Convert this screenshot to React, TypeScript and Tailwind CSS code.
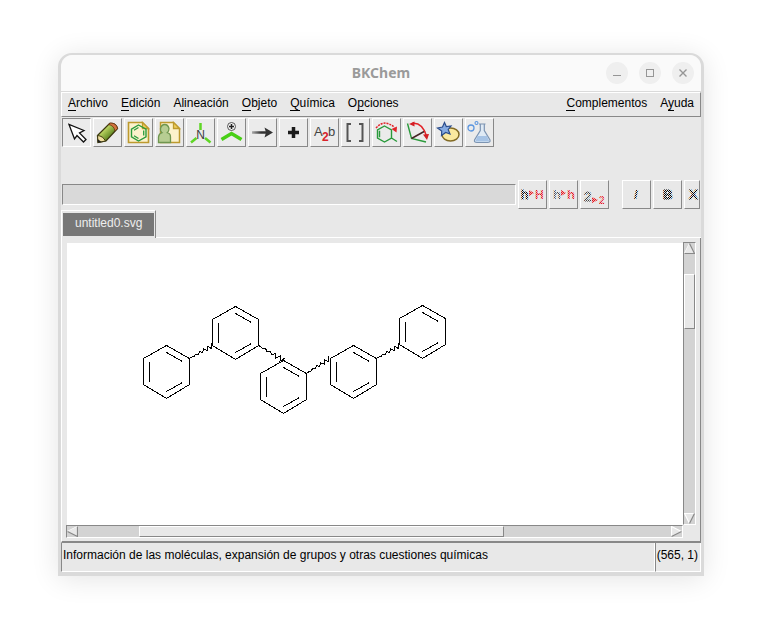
import React from 'react';

type Point = [number, number];

const leftMenus: [string, string, string][] = [
  ['', 'A', 'rchivo'],
  ['', 'E', 'dición'],
  ['A', 'l', 'ineación'],
  ['', 'O', 'bjeto'],
  ['', 'Q', 'uímica'],
  ['O', 'p', 'ciones'],
];

const rightMenus: [string, string, string][] = [
  ['', 'C', 'omplementos'],
  ['A', 'y', 'uda'],
];

const raised = 'border border-t-white border-l-white border-r-[#888888] border-b-[#888888]';
const sunken = 'border border-t-[#888888] border-l-[#888888] border-r-white border-b-white';

const MenuItem: React.FC<{ label: [string, string, string] }> = ({ label }) => (
  <button className="text-xs leading-4 text-black">
    {label[0]}
    <span className="border-b border-black">{label[1]}</span>
    {label[2]}
  </button>
);

// icons are drawn on the 27px face of the button
const tools: { name: string; icon: React.ReactNode }[] = [
  {
    name: 'Editar',
    icon: (
      <path d="M6 5.5 L11.5 20 L14 16.500 L20.500 23 L23 20.500 L16.500 14 L21 11.500 Z" fill="#fff" stroke="#111" strokeWidth="1.3" />
    ),
  },
  {
    name: 'Dibujar',
    icon: (
      <>
        <path d="M3.500 16.500 L15.500 4.500 Q22 3.500 23.500 9.500 L12 22 L4 23.500 Z" fill="url(#pencil)" stroke="#3d3a10" strokeWidth="1.300" />
        <path d="M14.500 5.500 L16.500 4 Q22.500 4 23.500 9.500 L21 12 Q20 6.500 14.500 5.500 Z" fill="#d2733f" stroke="#6b3510" strokeWidth="0.800" />
        <path d="M3.500 16.500 Q9 17 11.500 22 L4 23.500 Z" fill="#f1dfa0" stroke="#3d3a10" />
        <path d="M3.700 20 L7.500 23 L4 23.500 Z" fill="#222" />
      </>
    ),
  },
  {
    name: 'Plantillas',
    icon: (
      <>
        <path d="M3.500 3.500 H17.500 L23.500 9.500 V23.500 H3.500 Z" fill="#fcf2cc" stroke="#bd9a2e" strokeWidth="1.600" />
        <path d="M17.500 3.500 V9.500 H23.500 Z" fill="#efcf5c" stroke="#bd9a2e" strokeWidth="1.300" />
        <path d="M13.500 6 L21 10.200 V17.800 L13.500 22 L6.500 17.800 V10.200 Z" fill="none" stroke="#2b9c3c" strokeWidth="1.400" />
        <path d="M13.500 8.500 L9 11.200 M9 16.800 L13.500 19.500 M18.700 11.500 V16.500" fill="none" stroke="#2b9c3c" strokeWidth="1.300" />
      </>
    ),
  },
  {
    name: 'Plantillas de usuario',
    icon: (
      <>
        <path d="M4.500 3.500 H17.500 L23.500 9.500 V23.500 H4.500 Z" fill="#fcf2cc" stroke="#bd9a2e" strokeWidth="1.500" />
        <path d="M17.500 3.500 V9.500 H23.500 Z" fill="#efcf5c" stroke="#bd9a2e" strokeWidth="1.300" />
        <path d="M2.500 23.500 V18 Q3 14.500 6 13.700 Q4 12 4.500 9.500 Q5.500 5.500 8.700 5.500 Q12 5.500 13 9.500 Q13 12 11.300 13.700 Q14.500 14.500 14.500 18 V23.500 Z" fill="#b7cd92" stroke="#6f9650" strokeWidth="1.300" />
      </>
    ),
  },
  {
    name: 'Átomo',
    icon: (
      <>
        <path d="M13.500 4 V11" stroke="#5fd625" strokeWidth="2.500" />
        <path d="M9.500 19 L4 23.500 M18 19 L23.500 23.500" stroke="#5fd625" strokeWidth="2.500" />
        <text x="13.500" y="20" textAnchor="middle" fontSize="12" fill="#3b3b3b">N</text>
      </>
    ),
  },
  {
    name: 'Marca',
    icon: (
      <>
        <path d="M3.500 20.500 L13.500 14.500 L23.500 20.500" fill="none" stroke="#48cf16" strokeWidth="3.500" />
        <circle cx="13.500" cy="7.500" r="4" fill="#f4f4f4" stroke="#555" />
        <path d="M11 7.500 H16 M13.500 5 V10" stroke="#222" strokeWidth="1.500" />
      </>
    ),
  },
  {
    name: 'Flecha',
    icon: (
      <>
        <path d="M3 13.500 H18" stroke="url(#shaft)" strokeWidth="2.500" />
        <path d="M15.500 8.500 L24 13.500 L15.500 18.500 L17 13.500 Z" fill="#333" />
      </>
    ),
  },
  { name: 'Más', icon: <path d="M8 13.500 H19 M13.500 8 V19" stroke="#1b1b1b" strokeWidth="3.500" /> },
  {
    name: 'Texto',
    icon: (
      <>
        <text x="3" y="17" fontSize="13" fill="#444">A</text>
        <text x="11" y="22" fontSize="12" fontWeight="700" fill="#d8232a">2</text>
        <text x="17" y="17" fontSize="13" fill="#444">b</text>
      </>
    ),
  },
  {
    name: 'Corchetes',
    icon: <path d="M9 5 H5.500 V22 H9 M17 5 H20.500 V22 H17" fill="none" stroke="#555" strokeWidth="2" />,
  },
  {
    name: 'Rotar',
    icon: (
      <>
        <path d="M11.500 7 L18.500 11 V19 L11.500 23 L4.500 19 V11 Z M6.500 11.800 V18.200 M18.500 19 L24 22.500" fill="none" stroke="#2a9a3b" strokeWidth="1.400" />
        <path d="M3 9 Q11.500 -0.500 21.500 8.500" fill="none" stroke="#e12329" strokeWidth="1.500" strokeDasharray="2 1" />
        <path d="M18.500 10 L24 7.500 L23.500 13.500 Z" fill="#e12329" />
      </>
    ),
  },
  {
    name: 'Alinear',
    icon: (
      <>
        <path d="M3.500 4.500 L7.500 19.500 L22 23" fill="none" stroke="#2a9a3b" strokeWidth="1.400" />
        <path d="M7.500 19.500 L21 12" stroke="#452525" strokeWidth="1.500" />
        <path d="M8 4.500 Q18 3 22.500 17" fill="none" stroke="#e12329" strokeWidth="1.500" />
        <path d="M5 5 L10.500 2.500 V7.500 Z M19 15.500 L25 15 L23 21 Z" fill="#d41d24" />
      </>
    ),
  },
  {
    name: 'Vectores',
    icon: (
      <>
        <ellipse cx="15.500" cy="15.500" rx="8.500" ry="6.500" fill="#fbe99f" stroke="#826a24" strokeWidth="1.500" />
        <path d="M9.500 3.500 L11.300 7.500 L16 7 L13.200 10.500 L15 15 L10.700 13.500 L6.500 16.500 L6.700 12 L2.500 9 L7.500 8 Z" fill="#86abe2" stroke="#2c4d8b" strokeWidth="1.200" />
      </>
    ),
  },
  {
    name: 'Varios',
    icon: (
      <>
        <path d="M13 5 H19.500 M14.300 5.500 V11.500 L8.500 21 Q8 23.500 11 23.500 H21.500 Q24.500 23.500 24 21 L18.300 11.500 V5.500" fill="#dfeaf5" stroke="#7c94b2" strokeWidth="1.200" />
        <path d="M11.500 17 H21 L23.300 22.500 H9.300 Z" fill="#a6c3e5" />
        <circle cx="5" cy="9" r="3" fill="none" stroke="#5c96df" strokeWidth="1.300" />
        <circle cx="10.500" cy="4" r="1.500" fill="none" stroke="#5c96df" strokeWidth="1.100" />
      </>
    ),
  },
];

const ring: Point[] = [[0, 0], [23, 13], [23, 39], [0, 53], [-23, 39], [-23, 13]];

const ringTops: Point[] = [[99, 102], [168, 63], [216, 117], [286, 102], [355, 62]];

const wavyBonds: [Point, Point][] = [
  [[122, 115], [145, 102]],
  [[191, 102], [216, 117]],
  [[239, 130], [262, 115]],
  [[309, 115], [332, 102]],
];

// zigzag whose amplitude grows towards the second atom
const zigzag = ([x1, y1]: Point, [x2, y2]: Point): string => {
  const steps = 11;
  const length = Math.hypot(x2 - x1, y2 - y1);
  const nx = -(y2 - y1) / length;
  const ny = (x2 - x1) / length;
  const points: string[] = [];
  for (let i = 0; i <= steps; i++) {
    const t = i / steps;
    const side = (i % 2 === 0 ? 1 : -1) * t * 2.6;
    points.push(`${x1 + (x2 - x1) * t + nx * side},${y1 + (y2 - y1) * t + ny * side}`);
  }
  return points.join(' ');
};

const Molecule: React.FC = () => (
  <svg width="400" height="190" className="block" fill="none" stroke="#000" shapeRendering="crispEdges" aria-label="Molécula">
    <g transform="translate(0.5 0.5)">
      {ringTops.map(([x, y]) => (
        <g key={`${x}-${y}`} transform={`translate(${x} ${y})`}>
          <polygon points={ring.map(p => p.join(',')).join(' ')} />
          <path d="M-17 16 V36 M0 7 L16 16 M0 46 L16 37" />
        </g>
      ))}
      {wavyBonds.map(([from, to]) => (
        <polyline key={from.join('-')} points={zigzag(from, to)} />
      ))}
    </g>
  </svg>
);

const FormatButton: React.FC<{ name: string; className: string; children: React.ReactNode }> = ({ name, className, children }) => (
  <button disabled aria-label={name} className={`${raised} ${className} h-[29px] shrink-0 flex items-center justify-center bg-[#e8e8e8]`}>
    {children}
  </button>
);

const Arrow: React.FC<{ direction: 'up' | 'down' | 'left' | 'right' }> = ({ direction }) => {
  const shapes = {
    up: { light: 'M0.5 10.500 L5.500 0.500', dark: 'M5.500 0.500 L10.500 10.500 H0.500' },
    down: { light: 'M5.500 10.500 L0.500 0.500 H10.500', dark: 'M10.500 0.500 L5.500 10.500' },
    left: { light: 'M0.500 5.500 L10.500 0.500', dark: 'M10.500 0.500 V10.500 L0.500 5.500' },
    right: { light: 'M10.500 5.500 L0.500 0.500 V10.500', dark: 'M0.500 10.500 L10.500 5.500' },
  };
  return (
    <button aria-label={direction} className="shrink-0 block">
      <svg width="11" height="11" fill="none" strokeWidth="1.200" className="block">
        <path d={shapes[direction].light} fill="#e8e8e8" stroke="#fff" />
        <path d={shapes[direction].dark} fill="#e8e8e8" stroke="#888" />
      </svg>
    </button>
  );
};

const App: React.FC = () => {
  return (
    <div className="min-h-screen flex flex-col bg-white px-[58px] pt-[53px] pb-[63px] font-['Liberation_Sans',Arial,sans-serif] text-xs text-black cursor-default">
      {/* pixel dither and gradients shared by the icons */}
      <svg width="0" height="0" className="absolute">
        <defs>
          <pattern id="ditherBlack" width="2" height="2" patternUnits="userSpaceOnUse">
            <rect width="1" height="1" fill="#000" />
            <rect x="1" y="1" width="1" height="1" fill="#000" />
          </pattern>
          <pattern id="ditherGray" width="2" height="2" patternUnits="userSpaceOnUse">
            <rect width="1" height="1" fill="#444" />
            <rect x="1" y="1" width="1" height="1" fill="#444" />
          </pattern>
          <pattern id="ditherRed" width="2" height="2" patternUnits="userSpaceOnUse">
            <rect width="2" height="2" fill="#f3a9ab" />
            <rect width="1" height="1" fill="#e01820" />
            <rect x="1" y="1" width="1" height="1" fill="#e01820" />
          </pattern>
          <linearGradient id="pencil" x1="0" y1="0" x2="1" y2="1">
            <stop offset="0.3" stopColor="#c5dc69" />
            <stop offset="0.7" stopColor="#567e1b" />
          </linearGradient>
          <linearGradient id="shaft" gradientUnits="userSpaceOnUse" x1="3" y1="0" x2="18" y2="0">
            <stop offset="0" stopColor="#aaa" />
            <stop offset="0.6" stopColor="#333" />
          </linearGradient>
        </defs>
      </svg>

      <div className="flex-1 flex flex-col rounded-t-[14px] overflow-hidden border-[3px] border-t-2 border-b-4 border-[#dadada] bg-[#e8e8e8] shadow-[0_3px_28px_rgba(0,0,0,0.11)]">
        <header className="h-[37px] shrink-0 flex items-center bg-[#fafafa] border-b border-[#dadada] px-[7px]">
          <div className="flex-1" />
          <h1 className="font-['Noto_Sans',sans-serif] text-sm font-bold text-[#9a9a9a]">BKChem</h1>
          <div className="flex-1 flex justify-end gap-[11px]">
            <button aria-label="Minimizar" className="w-[22px] h-[22px] rounded-full bg-[#efefef]">
              <svg width="22" height="22" stroke="#959595"><path d="M7 13.500 H15" /></svg>
            </button>
            <button aria-label="Maximizar" className="w-[22px] h-[22px] rounded-full bg-[#efefef]">
              <svg width="22" height="22" fill="none" stroke="#959595"><rect x="7.500" y="7.500" width="7" height="7" /></svg>
            </button>
            <button aria-label="Cerrar" className="w-[22px] h-[22px] rounded-full bg-[#efefef]">
              <svg width="22" height="22" stroke="#959595" strokeWidth="1.400"><path d="M7.500 7.500 L14.500 14.500 M14.500 7.500 L7.500 14.500" /></svg>
            </button>
          </div>
        </header>

        <nav className={`${raised} h-[25px] shrink-0 flex items-start justify-between px-1.5 pt-0.5`}>
          <div className="flex gap-[13px]">
            {leftMenus.map(label => <MenuItem key={label.join('')} label={label} />)}
          </div>
          <div className="flex gap-[13px]">
            {rightMenus.map(label => <MenuItem key={label.join('')} label={label} />)}
          </div>
        </nav>

        <div className="flex gap-0.5 pl-px pt-px">
          {tools.map((tool, index) => (
            <button
              key={tool.name}
              aria-label={tool.name}
              className={`${index === 0 ? sunken : raised} w-[29px] h-[29px] bg-[#ebebeb]`}
            >
              <svg width="27" height="27" className="block">{tool.icon}</svg>
            </button>
          ))}
        </div>

        <div className="flex gap-0.5 items-center mt-[33px] pl-px pr-px">
          <input aria-label="Texto" disabled className={`${sunken} flex-1 min-w-0 h-[21px] bg-[#d9d9d9]`} />
          <FormatButton name="Mayúsculas" className="w-[29px]">
            <svg width="27" height="27" fontSize="13">
              <text x="2" y="18" fill="url(#ditherBlack)" stroke="url(#ditherBlack)">h</text>
              <path d="M10 9 L15 12 L10 15 Z" fill="url(#ditherRed)" />
              <text x="16" y="18" fontSize="12" fontWeight="700" fill="url(#ditherRed)">H</text>
            </svg>
          </FormatButton>
          <FormatButton name="Minúsculas" className="w-[29px]">
            <svg width="27" height="27" fontSize="13" fontWeight="700">
              <text x="3" y="18" fill="url(#ditherGray)">h</text>
              <path d="M11 9 L16 12 L11 15 Z" fill="url(#ditherRed)" />
              <text x="17" y="18" fill="url(#ditherRed)">h</text>
            </svg>
          </FormatButton>
          <FormatButton name="Subíndice" className="w-[29px]">
            <svg width="27" height="27" fontSize="13">
              <text x="3" y="20" fill="url(#ditherBlack)" stroke="url(#ditherGray)">2</text>
              <path d="M11 16 L17 19 L11 22 Z" fill="url(#ditherRed)" />
              <text x="18" y="23" fontSize="10" fontWeight="700" fill="url(#ditherRed)">2</text>
            </svg>
          </FormatButton>
          <FormatButton name="Cursiva" className="w-[29px] ml-[11px]">
            <svg width="27" height="27" fontSize="13" fontWeight="700">
              <text x="11" y="18" fontStyle="italic" fill="url(#ditherBlack)">I</text>
            </svg>
          </FormatButton>
          <FormatButton name="Negrita" className="w-[29px]">
            <svg width="27" height="27" fontSize="13" fontWeight="700">
              <text x="9" y="18" stroke="url(#ditherBlack)" fill="url(#ditherBlack)">B</text>
            </svg>
          </FormatButton>
          <FormatButton name="Superíndice" className="w-4">
            <svg width="14" height="27" fontSize="13">
              <text x="4" y="18" fill="url(#ditherBlack)" stroke="url(#ditherBlack)">X</text>
            </svg>
          </FormatButton>
        </div>

        <div className="flex mt-px h-7 shrink-0">
          <button className="border-t border-l border-r border-t-white border-l-white border-r-[#888888] pt-0.5 pb-0.5 px-px">
            <span className="block h-[23px] px-3 leading-5 bg-[#777777] text-[#eeeeee]">untitled0.svg</span>
          </button>
          <div className="flex-1 border-b border-white" />
        </div>

        <main className="flex-1 flex flex-col border-l border-white border-r border-r-[#888888] border-b-2 border-b-[#888888] pl-1 pr-1 pt-1 pb-[3px]">
          <div className="flex-1 flex">
            <div className="flex-1 min-w-0 overflow-hidden bg-white mt-px ml-px">
              <Molecule />
            </div>
            <div className={`${sunken} w-[13px] flex flex-col items-center bg-[#d3d3d3]`}>
              <Arrow direction="up" />
              <div className="grow-[20]" />
              <div className={`${raised} w-full grow-[53] bg-[#e8e8e8]`} />
              <div className="grow-[183]" />
              <Arrow direction="down" />
            </div>
          </div>
          <div className={`${sunken} mr-[13px] h-[13px] flex items-center bg-[#d3d3d3]`}>
            <Arrow direction="left" />
            <div className="grow-[61]" />
            <div className={`${raised} h-full grow-[363] bg-[#e8e8e8]`} />
            <div className="grow-[167]" />
            <Arrow direction="right" />
          </div>
        </main>

        <footer className="flex h-[29px] shrink-0 leading-4">
          <div className={`${sunken} border-t-0 flex-1 pl-px pt-1`}>
            Información de las moléculas, expansión de grupos y otras cuestiones químicas
          </div>
          <div className={`${sunken} border-t-0 pl-px pr-0.5 pt-1`}>(565, 1)</div>
        </footer>
      </div>
    </div>
  );
};

export default App;
